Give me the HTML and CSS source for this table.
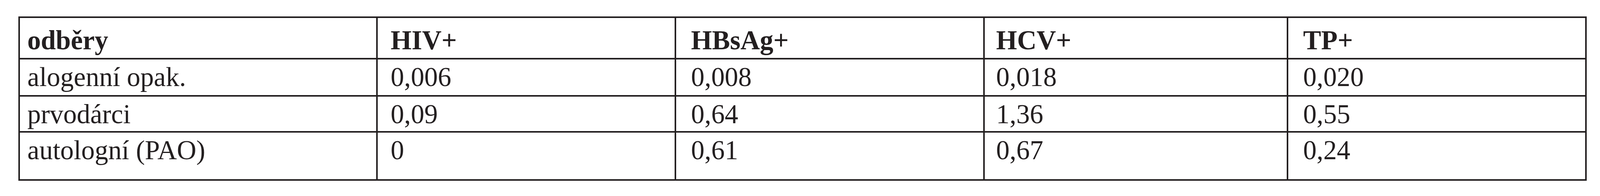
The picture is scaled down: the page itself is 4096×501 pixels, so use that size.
FILE: index.html
```html
<!DOCTYPE html>
<html lang="cs">
<head>
<meta charset="utf-8">
<title>Tabulka</title>
<link rel="stylesheet" href="styles.css">
</head>
<body>
<div class="table">
  <div class="cell head c1">odběry</div>
  <div class="cell head c2">HIV+</div>
  <div class="cell head c3">HBsAg+</div>
  <div class="cell head c4">HCV+</div>
  <div class="cell head c5">TP+</div>

  <div class="cell c1">alogenní opak.</div>
  <div class="cell c2">0,006</div>
  <div class="cell c3">0,008</div>
  <div class="cell c4">0,018</div>
  <div class="cell c5">0,020</div>

  <div class="cell c1">prvodárci</div>
  <div class="cell c2">0,09</div>
  <div class="cell c3">0,64</div>
  <div class="cell c4">1,36</div>
  <div class="cell c5">0,55</div>

  <div class="cell c1">autologní (PAO)</div>
  <div class="cell c2">0</div>
  <div class="cell c3">0,61</div>
  <div class="cell c4">0,67</div>
  <div class="cell c5">0,24</div>
</div>
</body>
</html>
```
FILE: styles.css
```css
html, body {
  margin: 0;
  padding: 0;
  background: #ffffff;
}

body {
  padding: 42px 0 0 47px;
  font-family: "Liberation Serif", "Times New Roman", serif;
  color: #231f20;
}

.table {
  display: grid;
  grid-template-columns: 912px 760px 786px 773px 760px;
  grid-template-rows: 102px 91px 88px 119px;
  gap: 4px;
  padding: 4px;
  background: #231f20;
  width: max-content;
}

.cell {
  background: #ffffff;
  font-size: 69px;
  line-height: 69px;
  padding-top: 11px;
  white-space: nowrap;
}

.head {
  font-weight: bold;
  padding-top: 23px;
}

.c1 { padding-left: 19px; }
.c2 { padding-left: 33px; }
.c3 { padding-left: 38px; }
.c4 { padding-left: 29px; }
.c5 { padding-left: 38px; }
```
